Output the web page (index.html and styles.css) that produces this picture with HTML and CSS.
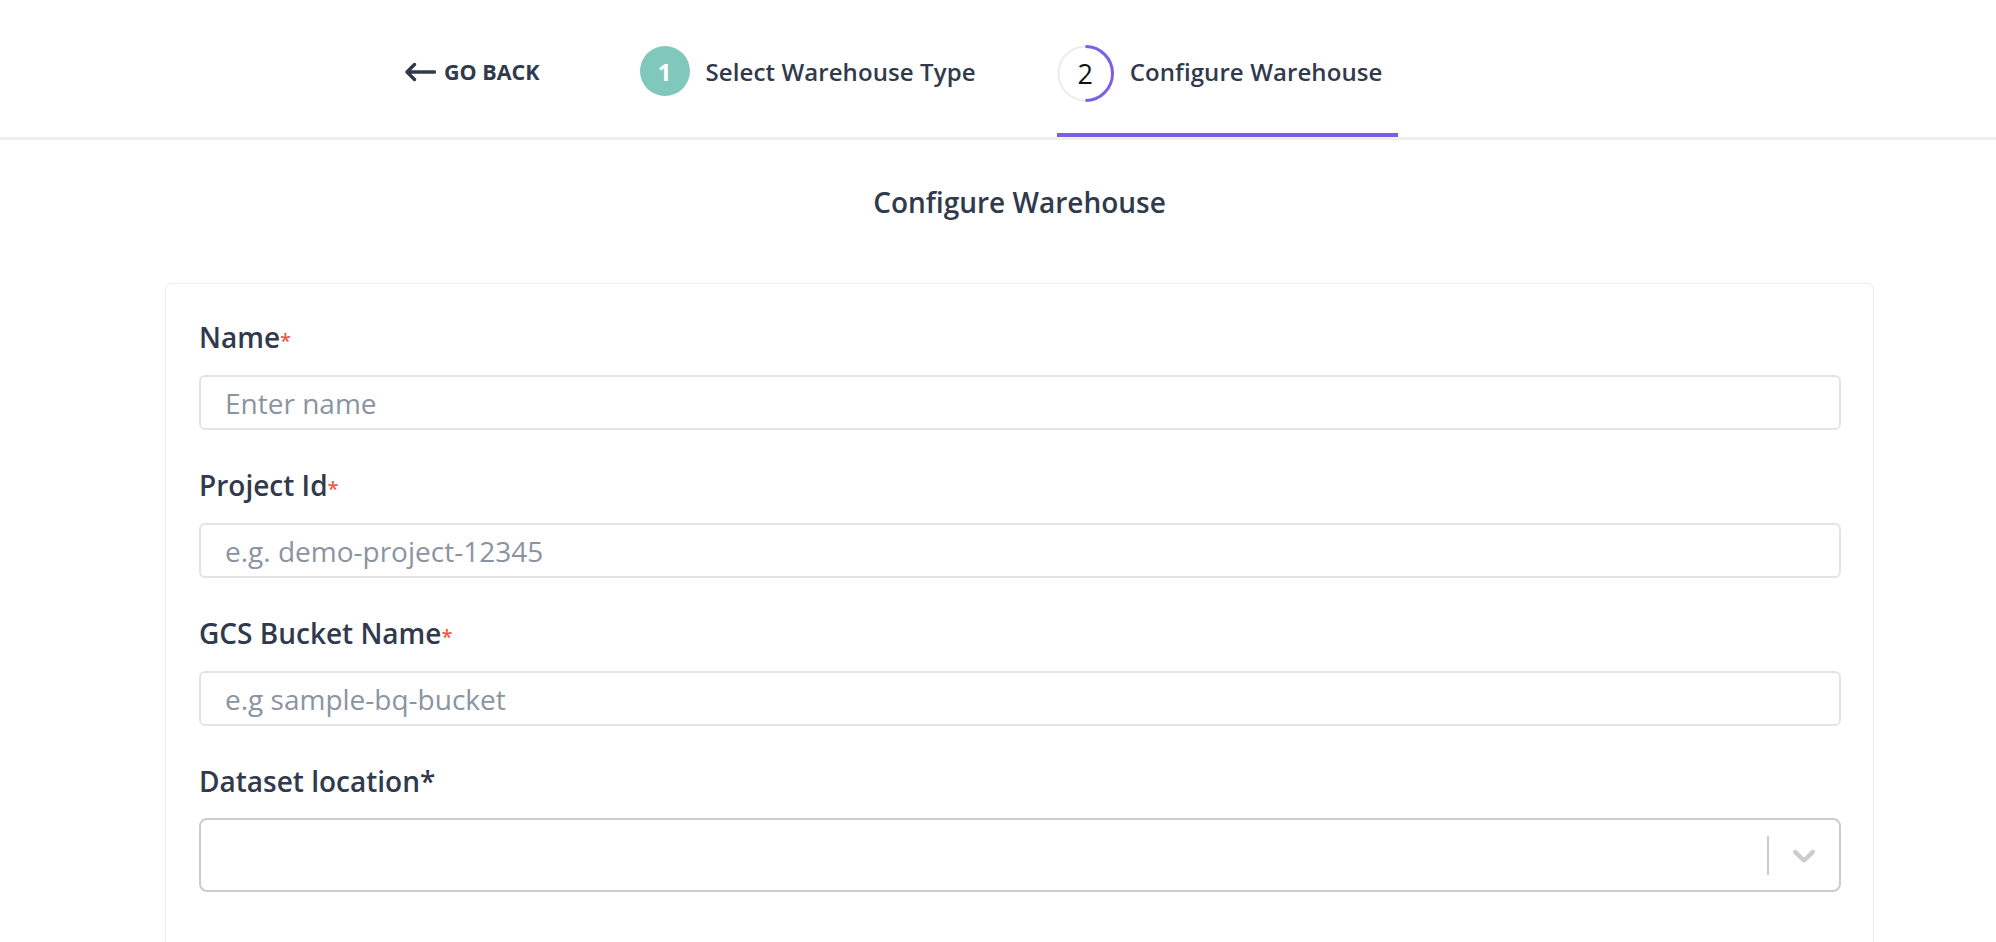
FILE: index.html
```html
<!DOCTYPE html>
<html lang="en">
<head>
<meta charset="utf-8">
<title>Configure Warehouse</title>
<link rel="stylesheet" href="styles.css">
</head>
<body>
<header class="topbar">
  <nav class="steps">
    <a class="back" href="#">
      <svg class="back-icon" width="32" height="20" viewBox="0 0 32 20" aria-hidden="true">
        <path d="M30.5 10H3M10.5 2.5L3 10l7.5 7.5" fill="none" stroke="#313a4d" stroke-width="3.4" stroke-linecap="round" stroke-linejoin="round"/>
      </svg>
      <span>GO BACK</span>
    </a>
    <div class="step step-done">
      <span class="badge">1</span>
      <span class="step-label">Select Warehouse Type</span>
    </div>
    <div class="step step-active">
      <span class="ring">
        <svg class="ring-svg" width="57" height="57" viewBox="0 0 57 57" aria-hidden="true">
          <circle cx="28.5" cy="28.5" r="27" fill="none" stroke="#ececec" stroke-width="2"/>
          <path d="M28.5 1.5A27 27 0 0 1 28.5 55.5" fill="none" stroke="#7b60e4" stroke-width="3"/>
        </svg>
        <span class="ring-num">2</span>
      </span>
      <span class="step-label">Configure Warehouse</span>
    </div>
  </nav>
</header>

<main class="content">
  <h2 class="title">Configure Warehouse</h2>
  <section class="card">
    <div class="field">
      <label class="label">Name<span class="req">*</span></label>
      <input class="input" type="text" placeholder="Enter name">
    </div>
    <div class="field">
      <label class="label">Project Id<span class="req">*</span></label>
      <input class="input" type="text" placeholder="e.g. demo-project-12345">
    </div>
    <div class="field">
      <label class="label">GCS Bucket Name<span class="req">*</span></label>
      <input class="input" type="text" placeholder="e.g sample-bq-bucket">
    </div>
    <div class="field field-select">
      <label class="label">Dataset location*</label>
      <div class="select">
        <div class="select-value"></div>
        <span class="select-sep"></span>
        <svg class="select-chevron" width="38" height="38" viewBox="0 0 20 20" aria-hidden="true">
          <path fill="#cccccc" d="M4.516 7.548c0.436-0.446 1.043-0.481 1.576 0l3.908 3.747 3.908-3.747c0.533-0.481 1.141-0.446 1.574 0 0.436 0.445 0.408 1.197 0 1.615-0.406 0.418-4.695 4.502-4.695 4.502-0.217 0.223-0.502 0.335-0.787 0.335s-0.57-0.112-0.789-0.335c0 0-4.287-4.084-4.695-4.502s-0.436-1.17 0-1.615z"/>
        </svg>
      </div>
    </div>
  </section>
</main>
</body>
</html>
```

FILE: styles.css
```css
* {
  box-sizing: border-box;
}

html, body {
  margin: 0;
  padding: 0;
  background: #ffffff;
}

body {
  font-family: "Open Sans", "Noto Sans", "Liberation Sans", sans-serif;
  color: #313a4d;
}

.topbar {
  height: 140px;
  border-bottom: 3px solid #efefef;
  background: #fff;
}

.steps {
  display: flex;
  align-items: stretch;
  height: 137px;
  padding-left: 404px;
}

.back {
  display: flex;
  align-items: center;
  gap: 8px;
  padding-top: 9px;
  padding-bottom: 4px;
  margin-right: 100px;
  color: #313a4d;
  text-decoration: none;
  font-size: 21.5px;
  font-weight: 700;
}

.back-icon {
  display: block;
  margin-top: 2px;
}

.step {
  display: flex;
  align-items: center;
  padding-top: 9px;
  padding-right: 17px;
  border-bottom: 4px solid transparent;
}

.step-done {
  margin-right: 64px;
}

.step-active {
  padding-right: 15px;
  border-bottom-color: #7b60e4;
}

.badge {
  width: 50px;
  height: 50px;
  border-radius: 50%;
  background: #80c7bc;
  color: #ffffff;
  font-size: 24px;
  font-weight: 700;
  display: flex;
  align-items: center;
  justify-content: center;
  margin-right: 16px;
}

.ring {
  position: relative;
  width: 57px;
  height: 57px;
  display: flex;
  align-items: center;
  justify-content: center;
  margin-right: 16px;
  margin-top: 4px;
}

.ring-svg {
  position: absolute;
  left: 0;
  top: 0;
}

.ring-num {
  position: relative;
  font-size: 27px;
  font-weight: 400;
  color: #111111;
}

.step-label {
  font-size: 24px;
  font-weight: 600;
  letter-spacing: 0.1px;
  color: #313a4d;
  white-space: nowrap;
}

.content {
  padding: 0 122px 0 165px;
}

.title {
  margin: 42px 0 61px;
  text-align: center;
  font-size: 28px;
  line-height: 40px;
  font-weight: 600;
  color: #313a4d;
}

.card {
  border: 1px solid #e8ebef;
  border-radius: 6px;
  padding: 33px 32px 60px 33px;
}

.field {
  display: flex;
  flex-direction: column;
  margin-bottom: 35px;
}

.label {
  font-size: 28px;
  line-height: 40px;
  font-weight: 600;
  color: #313a4d;
  margin-bottom: 18px;
}

.req {
  font-size: 20px;
  line-height: 0;
  color: #ec5b43;
}

.input {
  height: 55px;
  border: 2px solid #e1e5eb;
  border-radius: 6px;
  padding: 0 24px;
  font-family: "Open Sans", "Noto Sans", "Liberation Sans", sans-serif;
  font-size: 28px;
  color: #313a4d;
  outline: none;
  background: #fff;
}

.input::placeholder {
  color: #8a94a2;
  opacity: 1;
}

.field-select .label {
  margin-bottom: 17px;
}

.select {
  height: 74px;
  border: 2px solid #cccccc;
  border-radius: 8px;
  display: flex;
  align-items: center;
  padding-right: 16px;
}

.select-value {
  flex: 1;
}

.select-sep {
  width: 2px;
  height: 39px;
  background: #cccccc;
  margin-right: 16px;
}

.select-chevron {
  display: block;
}
```
